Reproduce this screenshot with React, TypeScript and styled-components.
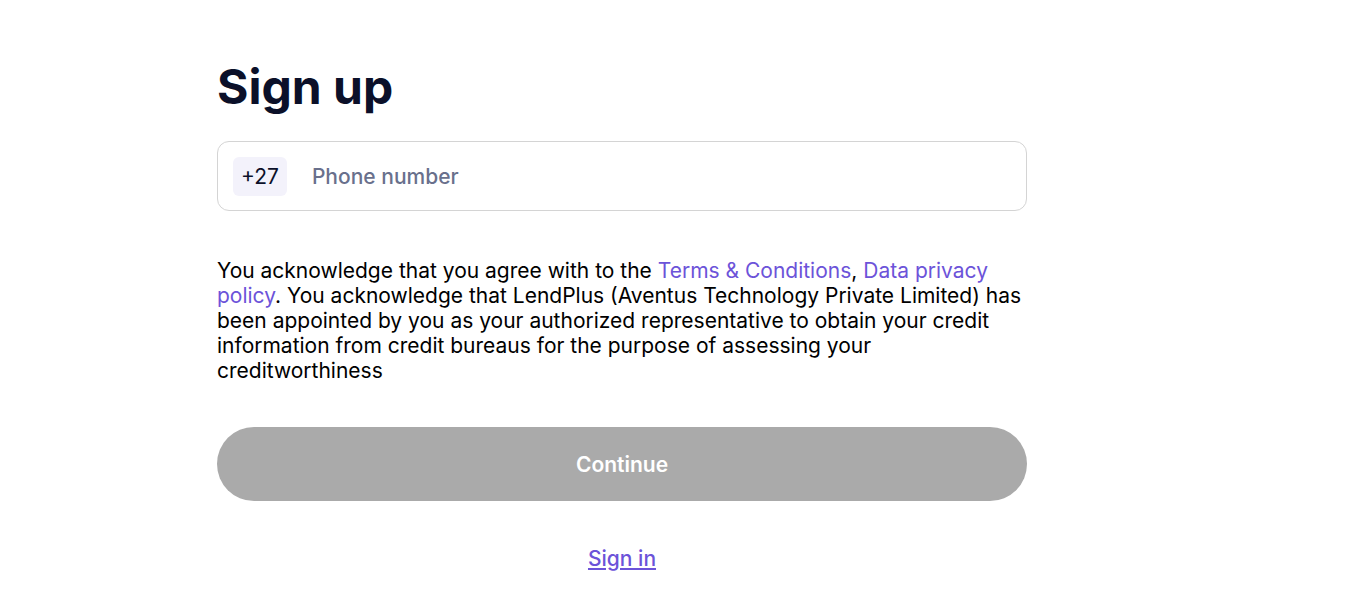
import React, { useState } from 'react'
import styled, { createGlobalStyle } from 'styled-components'

const GlobalStyle = createGlobalStyle`
  body {
    margin: 0;
    background: #ffffff;
    font-family: Inter, "Noto Sans", sans-serif;
  }
`

const Page = styled.div`
  padding: 58px 0 0 217px;
`

const Form = styled.div`
  width: 810px;
  display: flex;
  flex-direction: column;
`

const Title = styled.h1`
  margin: 0;
  font-size: 48px;
  font-weight: 700;
  line-height: 58px;
  color: #0b1029;
`

const PhoneField = styled.label`
  margin-top: 25px;
  height: 70px;
  box-sizing: border-box;
  border: 1px solid #d4d4d4;
  border-radius: 12px;
  display: flex;
  align-items: center;
  padding: 0 15px;
  gap: 25px;
`

const Prefix = styled.span`
  background: #f3f2fb;
  border-radius: 6px;
  height: 39px;
  padding: 0 8px;
  display: flex;
  align-items: center;
  font-size: 21px;
  color: #0b1029;
`

const PhoneInput = styled.input`
  flex: 1;
  border: none;
  outline: none;
  font-family: Inter, "Noto Sans", sans-serif;
  font-size: 21px;
  font-weight: 500;
  color: #0b1029;
  background: transparent;
  padding: 0;

  &::placeholder {
    color: #69708c;
  }
`

const Consent = styled.p`
  margin: 47px 0 0;
  font-size: 21px;
  line-height: 25px;
  color: #000000;
`

const TextLink = styled.a`
  color: #6c53d9;
  text-decoration: none;
`

const ContinueButton = styled.button`
  margin-top: 44px;
  height: 74px;
  border: none;
  border-radius: 37px;
  background: #aaaaaa;
  color: #ffffff;
  font-family: Inter, "Noto Sans", sans-serif;
  font-size: 21px;
  font-weight: 600;
  cursor: not-allowed;
`

const SignIn = styled.a`
  margin-top: 45px;
  align-self: center;
  font-size: 21px;
  font-weight: 500;
  color: #6c53d9;
  text-decoration: underline;
`

export default function App() {
  const [phone, setPhone] = useState('')

  return (
    <Page>
      <GlobalStyle />
      <Form>
        <Title>Sign up</Title>
        <PhoneField>
          <Prefix>+27</Prefix>
          <PhoneInput
            placeholder="Phone number"
            value={phone}
            onChange={e => setPhone(e.target.value)}
          />
        </PhoneField>
        <Consent>
          You acknowledge that you agree with to the{' '}
          <TextLink href="#">Terms &amp; Conditions</TextLink>,{' '}
          <TextLink href="#">Data privacy policy</TextLink>. You acknowledge that
          LendPlus (Aventus Technology Private Limited) has been appointed by you
          as your authorized representative to obtain your credit information
          from credit bureaus for the purpose of assessing your creditworthiness
        </Consent>
        <ContinueButton disabled={phone.length === 0}>Continue</ContinueButton>
        <SignIn href="#">Sign in</SignIn>
      </Form>
    </Page>
  )
}
